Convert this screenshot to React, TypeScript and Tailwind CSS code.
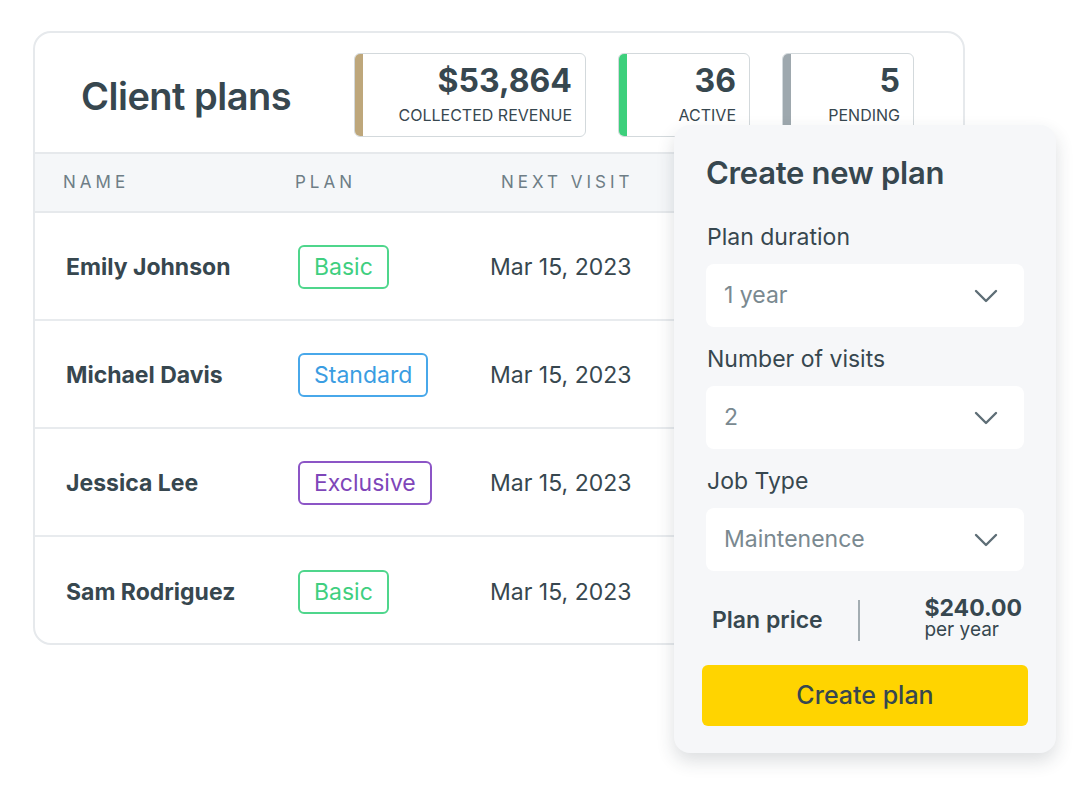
import { ReactNode } from "react";

const stats = [
  { value: "$53,864", label: "COLLECTED REVENUE", bar: "bg-[#bea77b]", width: "w-[232px]" },
  { value: "36", label: "ACTIVE", bar: "bg-[#3dd07c]", width: "w-[132px]" },
  { value: "5", label: "PENDING", bar: "bg-[#9ea8ae]", width: "w-[132px]" },
];

const clients = [
  { name: "Emily Johnson", plan: "Basic", tone: "border-[#4fd68c] text-[#3fcf7f]", date: "Mar 15, 2023" },
  { name: "Michael Davis", plan: "Standard", tone: "border-[#48a8ea] text-[#3a9de2]", date: "Mar 15, 2023" },
  { name: "Jessica Lee", plan: "Exclusive", tone: "border-[#8c55c6] text-[#7e46b9]", date: "Mar 15, 2023" },
  { name: "Sam Rodriguez", plan: "Basic", tone: "border-[#4fd68c] text-[#3fcf7f]", date: "Mar 15, 2023" },
];

function Chevron() {
  return (
    <svg width="24" height="14" viewBox="0 0 24 14" fill="none" className="shrink-0">
      <path d="M2 2l10 10 10-10" stroke="#5e6e76" strokeWidth="2.4" strokeLinecap="round" strokeLinejoin="round" />
    </svg>
  );
}

function Field({ label, value }: { label: string; value: string }) {
  return (
    <div>
      <div className="text-[23px] leading-[28px] text-[#37474f] pl-px">{label}</div>
      <div className="mt-[13px] h-[63px] rounded-[8px] bg-white flex items-center justify-between pl-[18px] pr-[26px]">
        <span className="text-[23px] text-[#7a8990]">{value}</span>
        <Chevron />
      </div>
    </div>
  );
}

function Th({ children, className }: { children: ReactNode; className: string }) {
  return <div className={`text-[17px] tracking-[4px] text-[#6e7e86] ${className}`}>{children}</div>;
}

export default function App() {
  return (
    <div className="relative w-[1088px] h-[800px] bg-white font-['Inter',sans-serif] text-[#37474f]">
      <div className="absolute left-[33px] top-[31px] w-[932px] h-[614px] rounded-[18px] border-2 border-[#e6e9ec] bg-white overflow-hidden flex flex-col">
        <div className="h-[121px] flex items-start pt-[20px] border-b-2 border-[#e6e9ec] shrink-0">
          <h1 className="w-[319px] pl-[46px] mt-[20px] text-[38px] font-semibold tracking-[-0.5px] leading-[46px]">Client plans</h1>
          <div className="flex gap-[32px]">
            {stats.map((s) => (
              <div
                key={s.label}
                className={`${s.width} h-[84px] rounded-[6px] border border-[#d3d9dc] overflow-hidden flex`}
              >
                <div className={`w-[8px] ${s.bar}`} />
                <div className="flex-1 flex flex-col items-end pr-[13px] pt-[6px]">
                  <div className="text-[32px] font-bold leading-[42px]">{s.value}</div>
                  <div className="text-[16px] leading-[20px] mt-[3px] text-[#37474f]">{s.label}</div>
                </div>
              </div>
            ))}
          </div>
        </div>

        <div className="h-[59px] shrink-0 bg-[#f5f7f9] border-b-2 border-[#e6e9ec] flex items-center pl-[28px]">
          <Th className="w-[232px]">NAME</Th>
          <Th className="w-[206px]">PLAN</Th>
          <Th className="">NEXT VISIT</Th>
        </div>

        {clients.map((c, i) => (
          <div
            key={c.name}
            className={`h-[108px] shrink-0 flex items-center pl-[31px] pt-[2px] ${i < clients.length - 1 ? "border-b-2 border-[#e8ebee]" : ""}`}
          >
            <div className="w-[232px] text-[23px] font-bold">{c.name}</div>
            <div className="w-[192px]">
              <span className={`inline-flex items-center h-[44px] px-[14px] rounded-[6px] border-2 text-[23px] ${c.tone}`}>
                {c.plan}
              </span>
            </div>
            <div className="text-[23px]">{c.date}</div>
          </div>
        ))}
      </div>

      <div className="absolute left-[674px] top-[125px] w-[382px] rounded-[16px] bg-[#f6f7f9] shadow-[0_8px_18px_rgba(40,50,60,0.16)] px-[32px] pt-[30px] pb-[27px] flex flex-col">
        <h2 className="text-[31px] leading-[36px] font-semibold tracking-[-0.3px]">Create new plan</h2>
        <div className="mt-[32px] flex flex-col gap-[18px]">
          <Field label="Plan duration" value="1 year" />
          <Field label="Number of visits" value="2" />
          <Field label="Job Type" value="Maintenence" />
        </div>
        <div className="mt-[29px] h-[41px] flex items-center pl-[6px] pr-[2px]">
          <div className="w-[146px] text-[23px] font-semibold">Plan price</div>
          <div className="w-[2px] h-[41px] bg-[#a3adb2]" />
          <div className="ml-auto -mt-[6px] flex flex-col">
            <span className="text-[23px] font-bold leading-[24px]">$240.00</span>
            <span className="text-[19px] leading-[20px]">per year</span>
          </div>
        </div>
        <button className="mt-[24px] -mx-[4px] h-[61px] rounded-[6px] bg-[#ffd400] text-[25px] font-medium text-[#37474f]">
          Create plan
        </button>
      </div>
    </div>
  );
}
